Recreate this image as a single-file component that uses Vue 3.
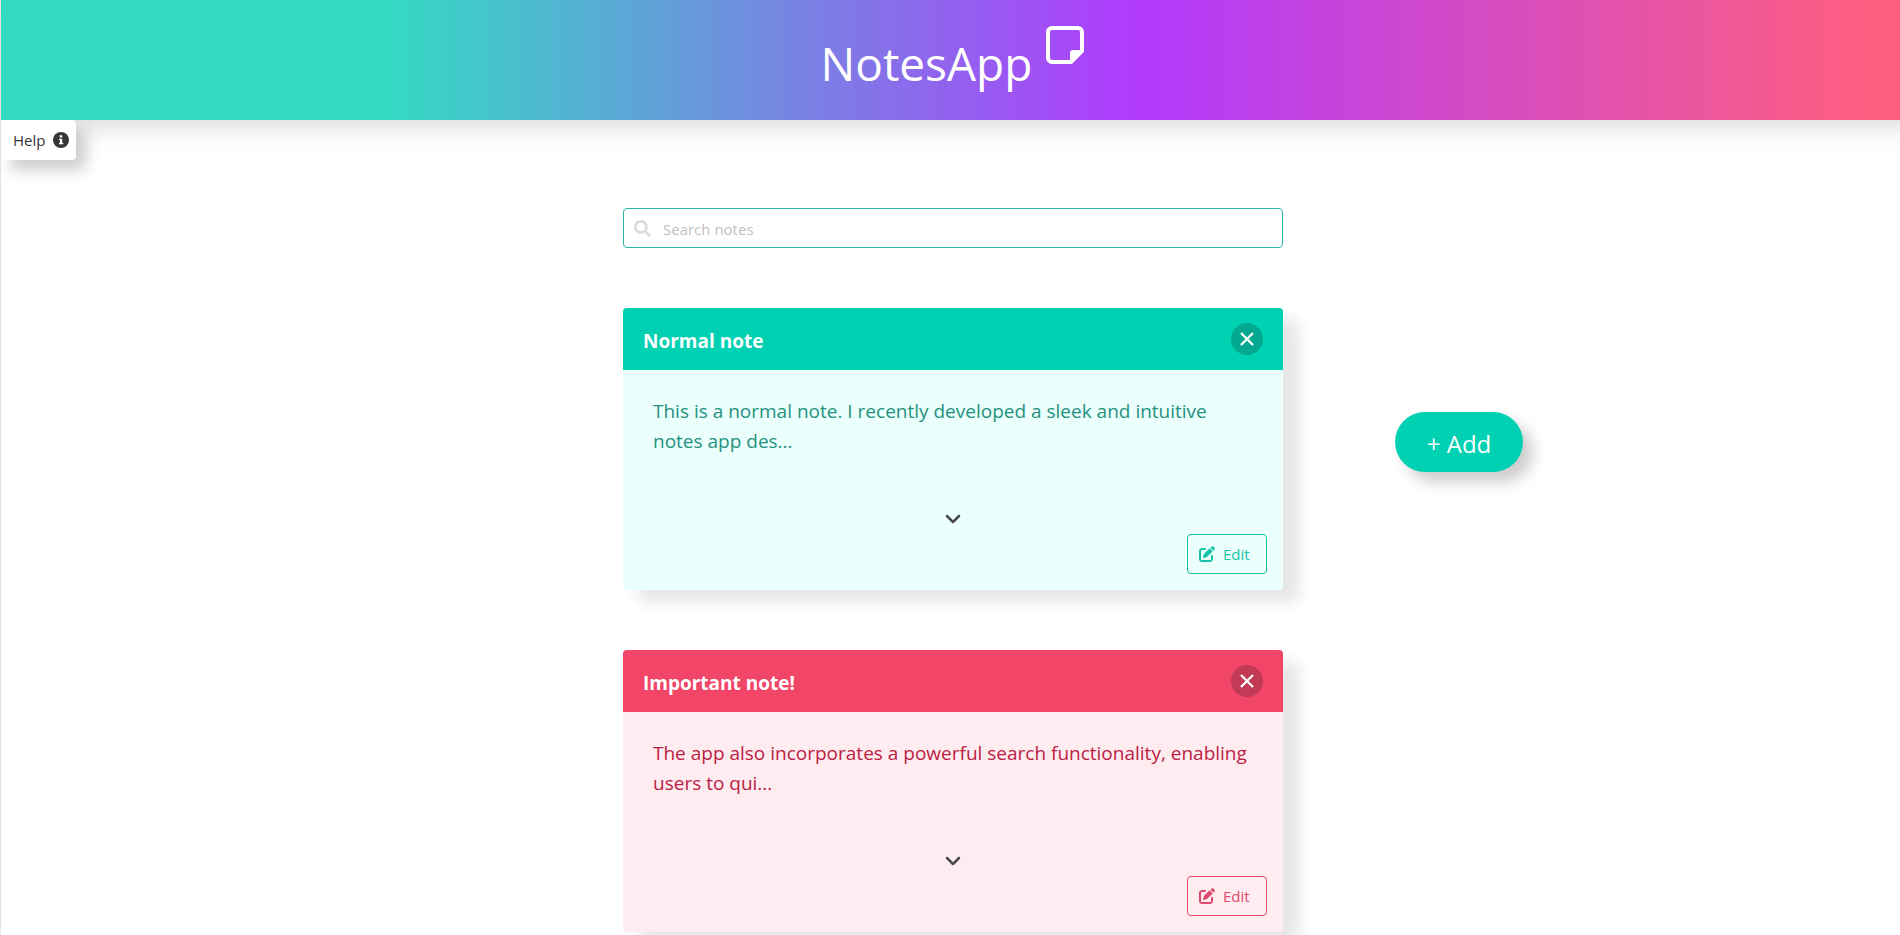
<script setup>
import { ref, computed } from 'vue'

const query = ref('')
const notes = ref([
  { id: 1, kind: 'normal', title: 'Normal note', text: 'This is a normal note. I recently developed a sleek and intuitive notes app des...' },
  { id: 2, kind: 'important', title: 'Important note!', text: 'The app also incorporates a powerful search functionality, enabling users to qui...' },
])
const shown = computed(() => {
  const q = query.value.toLowerCase()
  return notes.value.filter((n) => (n.title + n.text).toLowerCase().includes(q))
})
function remove(id) {
  notes.value = notes.value.filter((n) => n.id !== id)
}
</script>

<template>
  <div class="page">
    <header class="hero">
      <h1>NotesApp</h1>
      <svg class="logo" viewBox="0 0 38 38" aria-hidden="true">
        <path fill="none" stroke="#fff" stroke-width="4" stroke-linejoin="round" d="M6 2h26a4 4 0 0 1 4 4v19L25 36H6a4 4 0 0 1-4-4V6a4 4 0 0 1 4-4z" />
        <path fill="#fff" d="M37 24v2L26 37h-2V27a3 3 0 0 1 3-3z" />
      </svg>
    </header>
    <button class="help" type="button">
      Help
      <svg viewBox="0 0 16 16" aria-hidden="true">
        <circle cx="8" cy="8" r="8" fill="#363636" />
        <path fill="#fff" d="M6.7 3.2h2.5v2.4H6.7zM6 6.7h3.2v4h1v1.6H6v-1.6h1V8.3H6z" />
      </svg>
    </button>

    <main class="layout">
      <section class="column">
        <div class="search">
          <svg viewBox="0 0 512 512" aria-hidden="true">
            <path fill="currentColor" d="M505 442.700 405.300 343c-4.500-4.500-10.600-7-17-7H372c27.600-35.300 44-79.700 44-128C416 93.100 322.900 0 208 0S0 93.100 0 208s93.100 208 208 208c48.300 0 92.700-16.400 128-44v16.300c0 6.400 2.500 12.500 7 17l99.700 99.700c9.400 9.400 24.600 9.400 33.900 0l28.300-28.300c9.400-9.400 9.400-24.600.1-34zM208 336c-70.700 0-128-57.200-128-128 0-70.700 57.200-128 128-128 70.700 0 128 57.200 128 128 0 70.700-57.200 128-128 128z" />
          </svg>
          <input v-model="query" type="text" placeholder="Search notes" aria-label="Search notes" />
        </div>

        <article v-for="note in shown" :key="note.id" class="note" :class="note.kind">
          <header class="note-head">
            <h2>{{ note.title }}</h2>
            <button class="close" type="button" aria-label="Delete note" @click="remove(note.id)">
              <svg viewBox="0 0 14 14" aria-hidden="true">
                <path fill="none" stroke="#fff" stroke-width="2.300" d="M1 1l12 12M13 1L1 13" />
              </svg>
            </button>
          </header>
          <div class="note-body">
            <p>{{ note.text }}</p>
            <button class="expand" type="button" aria-label="Show more">
              <svg viewBox="0 0 16 10" aria-hidden="true">
                <path fill="none" stroke="#4a4a4a" stroke-width="2.500" stroke-linecap="round" stroke-linejoin="round" d="M2 2l6 6 6-6" />
              </svg>
            </button>
            <button class="edit" type="button">
              <svg viewBox="0 0 512 512" aria-hidden="true">
                <path fill="currentColor" d="M471.600 21.700c-21.900-21.900-57.300-21.900-79.200 0L362.300 51.700l97.900 97.900 30.100-30.100c21.900-21.900 21.900-57.300 0-79.200L471.600 21.700zm-299.200 220c-6.100 6.100-10.800 13.600-13.500 21.900l-29.600 88.800c-2.900 8.600-.6 18.100 5.800 24.600s15.900 8.700 24.600 5.800l88.800-29.600c8.200-2.700 15.700-7.400 21.900-13.500L437.700 172.300 339.700 74.300 172.400 241.700zM96 64C43 64 0 107 0 160V416c0 53 43 96 96 96H352c53 0 96-43 96-96V320c0-17.700-14.300-32-32-32s-32 14.300-32 32v96c0 17.700-14.300 32-32 32H96c-17.700 0-32-14.300-32-32V160c0-17.700 14.300-32 32-32h96c17.700 0 32-14.300 32-32s-14.300-32-32-32H96z" />
              </svg>
              Edit
            </button>
          </div>
        </article>
      </section>
      <aside class="side">
        <button class="add" type="button">+ Add</button>
      </aside>
    </main>
  </div>
</template>

<style>
body {
  overflow: hidden;
  background: #fff;
}
</style>

<style scoped>
.page {
  min-height: 100vh;
  border-left: 1px solid #e4e4e4;
  box-sizing: border-box;
  font-family: "Open Sans", "Noto Sans", sans-serif;
  font-size: 15px;
  color: #363636;
}
.page * {
  box-sizing: border-box;
}
button {
  font: inherit;
  color: inherit;
  cursor: pointer;
  border: 0;
}
h1, h2, p {
  margin: 0;
}
.hero {
  display: flex;
  justify-content: center;
  gap: 14px;
  height: 120px;
  padding-top: 26px;
  padding-left: 4px;
  background: linear-gradient(90deg, #33dbc3 20%, #b13afd 60%, #ff5f7e 99%);
  box-shadow: 10px 10px 20px rgba(0, 0, 0, 0.12);
}
.hero h1 {
  font-size: 46px;
  line-height: 74px;
  font-weight: 400;
  color: #fff;
}
.logo {
  width: 38px;
  height: 38px;
}
.help {
  display: flex;
  align-items: center;
  gap: 8px;
  height: 40px;
  padding: 0 7px 0 12px;
  background: #fff;
  border-radius: 0 4px 4px 0;
  box-shadow: 10px 10px 15px rgba(0, 0, 0, 0.2);
}
.help svg {
  width: 16px;
  height: 16px;
}
.layout {
  display: grid;
  grid-template-columns: 622fr 660fr 617fr;
  padding-top: 48px;
}
.column {
  grid-column: 2;
  display: grid;
  gap: 60px;
}
.search {
  display: flex;
  align-items: center;
  gap: 12px;
  height: 40px;
  padding: 0 10px;
  border: 1px solid #29b9a3;
  border-radius: 4px;
  color: #dbdbdb;
}
.search svg {
  width: 17px;
  height: 17px;
}
.search input {
  flex: 1;
  min-width: 0;
  padding: 2px 0 0;
  border: 0;
  outline: 0;
  font: inherit;
  color: #363636;
  background: transparent;
}
.search input::placeholder {
  color: #bfbfbf;
}
.note {
  border-radius: 4px;
  overflow: hidden;
  box-shadow: 16px 12px 15px rgba(0, 0, 0, 0.1);
}
.note-head {
  display: flex;
  align-items: center;
  justify-content: space-between;
  height: 62px;
  padding: 0 20px;
  color: #fff;
}
.note-head h2 {
  padding-top: 4px;
  font-size: 19px;
  line-height: 28px;
  font-weight: 700;
}
.close {
  display: grid;
  place-items: center;
  width: 32px;
  height: 32px;
  padding: 0;
  border-radius: 50%;
  background: rgba(10, 10, 10, 0.2);
}
.close svg {
  width: 14px;
  height: 14px;
}
.note-body {
  display: flex;
  flex-direction: column;
  padding: 26px 16px 16px 30px;
}
.note-body p {
  padding-right: 14px;
  font-size: 19px;
  line-height: 30px;
}
.expand {
  align-self: center;
  display: grid;
  place-items: center;
  width: 40px;
  height: 30px;
  margin: 48px 14px 0 0;
  padding: 0;
  background: transparent;
}
.expand svg {
  width: 16px;
  height: 10px;
}
.edit {
  align-self: flex-end;
  display: flex;
  align-items: center;
  gap: 8px;
  width: 80px;
  height: 40px;
  padding: 0 11px;
  border: 1px solid currentColor;
  border-radius: 4px;
  background: transparent;
}
.edit svg {
  width: 16px;
  height: 16px;
}
.normal .note-head {
  background: #00d1b2;
}
.normal .note-body {
  background: #ebfffc;
  color: #24917f;
}
.normal .edit {
  color: #17c2a8;
}
.important .note-head {
  background: #f14668;
}
.important .note-body {
  background: #feecf0;
  color: #bc2143;
}
.important .edit {
  color: #de4a6c;
}
.side {
  padding: 204px 0 0 112px;
}
.add {
  width: 128px;
  height: 60px;
  padding: 2px 0 0;
  border-radius: 30px;
  background: #00d1b2;
  color: #fff;
  font-size: 24px;
  box-shadow: 10px 10px 15px rgba(0, 0, 0, 0.2);
}
</style>
